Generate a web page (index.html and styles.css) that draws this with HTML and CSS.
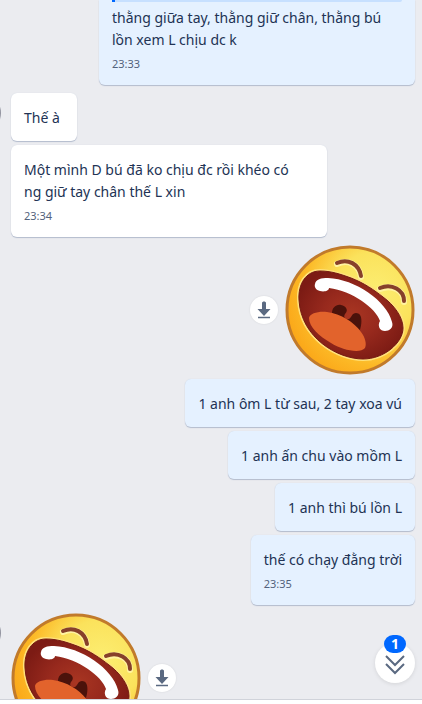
FILE: index.html
```html
<!DOCTYPE html>
<html lang="vi">

<head>
    <meta charset="UTF-8">
    <meta name="viewport" content="width=device-width, initial-scale=1.0">
    <title>Chat</title>
    <link rel="stylesheet" href="styles.css">
</head>

<body>
    <!-- shared shapes -->
    <svg class="defs" width="0" height="0" aria-hidden="true">
        <defs>
            <radialGradient id="skin" cx="0.7" cy="0.36" r="0.72">
                <stop offset="0" stop-color="#fcee72"></stop>
                <stop offset="0.45" stop-color="#fbe25c"></stop>
                <stop offset="0.8" stop-color="#fcb926"></stop>
                <stop offset="1" stop-color="#fba91a"></stop>
            </radialGradient>
            <radialGradient id="throat" cx="0.5" cy="0.5" r="0.55">
                <stop offset="0" stop-color="#a93622"></stop>
                <stop offset="0.5" stop-color="#97291d"></stop>
                <stop offset="1" stop-color="#7c1b14"></stop>
            </radialGradient>
            <symbol id="laugh" viewBox="0 0 130 130">
                <circle cx="65" cy="65" r="63" fill="url(#skin)" stroke="#c17a2b" stroke-width="3"></circle>
                <path d="M14 55C13 39 21 26 35 26C46 26 55 29 66 33C79 38 89 45 98 52C109 60 118 72 118 83C118 98 99 114 78 114C53 114 16 93 14 55Z" fill="none" stroke="#ffe17a" stroke-width="4"></path>
                <path d="M14 55C13 39 21 26 35 26C46 26 55 29 66 33C79 38 89 45 98 52C109 60 118 72 118 83C118 98 99 114 78 114C53 114 16 93 14 55Z" fill="url(#throat)" stroke="#751a12" stroke-width="1"></path>
                <path d="M47 68C47 63 51 59 56 60C61 61 64 65 60 69C58 72 60 75 64 74C67 72 67 68 71 68C78 68 77 79 75 85Z" fill="#4b120b"></path>
                <path d="M24 73C25 68 34 66 42 67C56 69 69 77 76 87C80 92 82 99 80 103C75 109 57 105 46 98C34 91 24 82 24 73Z" fill="#e2632c"></path>
                <path d="M30 39C31 34 36 33 43 33C70 34 102 56 107 77C109 83 104 86 100 86C95 86 92 81 95 76C91 63 67 46 44 43C44 46 39 47 35 46C31 45 29 42 30 39Z" fill="#fff"></path>
                <g fill="none" stroke-linecap="round">
                    <path d="M52 19C63 14 74 19 76 32M95 44C107 39 119 45 119 57" stroke="#fff3a0" stroke-width="6"></path>
                    <path d="M52 18C63 13 74 19 76 31M95 43C107 38 119 45 119 56" stroke="#87402a" stroke-width="4"></path>
                </g>
            </symbol>
            <symbol id="download" viewBox="0 0 28 28">
                <path d="M12 7C12 5 16 5 16 7V13H20.500L14 20L7.500 13H12Z" fill="#5a6981"></path>
                <path d="M8 21.500H20" stroke="#5a6981" stroke-width="1.500"></path>
            </symbol>
        </defs>
    </svg>

    <div class="chat">
        <div class="messages">
            <div class="group mine">
                <div class="bubble cut">
                    <div class="quote"></div>
                    <p>thằng giữa tay, thằng giữ chân, thằng bú lồn xem L chịu dc k</p>
                    <time>23:33</time>
                </div>
            </div>

            <div class="group">
                <div class="avatar"></div>
                <div class="bubble">
                    <p>Thế à</p>
                </div>
                <div class="bubble wide">
                    <p>Một mình D bú đã ko chịu đc rồi khéo có<br>ng giữ tay chân thế L xin</p>
                    <time>23:34</time>
                </div>
            </div>

            <div class="group mine">
                <div class="sticker">
                    <svg class="emoji" role="img" aria-label="😆"><use href="#laugh"></use></svg>
                    <button class="save" aria-label="Tải về"><svg><use href="#download"></use></svg></button>
                </div>
                <div class="bubble">
                    <p>1 anh ôm L từ sau, 2 tay xoa vú</p>
                </div>
                <div class="bubble">
                    <p>1 anh ấn chu vào mồm L</p>
                </div>
                <div class="bubble">
                    <p>1 anh thì bú lồn L</p>
                </div>
                <div class="bubble">
                    <p>thế có chạy đằng trời</p>
                    <time>23:35</time>
                </div>
            </div>

            <div class="group">
                <div class="avatar"></div>
                <div class="sticker">
                    <svg class="emoji" role="img" aria-label="😆"><use href="#laugh"></use></svg>
                    <button class="save" aria-label="Tải về"><svg><use href="#download"></use></svg></button>
                </div>
            </div>
        </div>

        <button class="to-bottom" aria-label="Xuống cuối">
            <svg viewBox="0 0 40 40">
                <path d="M11 13L20 22L29 13M11 21L20 30L29 21" fill="none" stroke="#5a6981" stroke-width="2"></path>
            </svg>
            <span class="badge">1</span>
        </button>
    </div>
    <div class="toolbar"></div>
</body>

</html>
```
FILE: styles.css
```css
* {
    box-sizing: border-box;
}

body {
    margin: 0;
    height: 100vh;
    display: flex;
    flex-direction: column;
    font-family: "Noto Sans", sans-serif;
    font-size: 14px;
    line-height: 22px;
    color: #223354;
    background-color: #ebecf0;
}

.defs {
    position: absolute;
}

.chat {
    position: relative;
    flex: 1;
    min-height: 0;
    overflow: hidden;
}

.messages {
    display: flex;
    flex-direction: column;
    gap: 8px;
    padding: 0 7px 0 11px;
}

.group {
    position: relative;
    display: flex;
    flex-direction: column;
    align-items: flex-start;
    gap: 4px;
}

.mine {
    align-items: flex-end;
}

.bubble {
    min-width: 66px;
    max-width: 316px;
    padding: 14px 13px 12px;
    border-radius: 6px;
    background-color: #fff;
    box-shadow: 0 1px 1px #b3bccd, 0 0 1px #ccd2dd;
}

.wide {
    width: 316px;
}

.mine .bubble {
    background-color: #e5f1ff;
}

.bubble p {
    margin: 0;
}

.bubble time {
    display: block;
    margin-top: 4px;
    font-size: 11px;
    line-height: 18px;
    color: #53627c;
}

/* message whose top is scrolled away */
.bubble.cut {
    padding-top: 0;
    border-radius: 0 0 6px 6px;
}

.quote {
    height: 2px;
    margin-bottom: 5px;
    border-left: 3px solid #0068ff;
    border-radius: 0 0 4px 0;
    background-color: #c7e0ff;
}

/* only the right edge shows */
.avatar {
    position: absolute;
    top: 0;
    left: -50px;
    width: 40px;
    height: 40px;
    border-radius: 50%;
    background-color: #9294a0;
}

.sticker {
    display: flex;
    align-items: center;
    gap: 7px;
}

.mine .sticker {
    flex-direction: row-reverse;
}

.emoji {
    display: block;
    width: 130px;
    height: 130px;
}

.save {
    width: 28px;
    height: 28px;
    padding: 0;
    border: 0;
    border-radius: 50%;
    background-color: #fff;
    box-shadow: 0 0 2px rgba(0, 0, 0, 0.1);
    cursor: pointer;
}

.save svg {
    display: block;
    width: 28px;
    height: 28px;
}

.to-bottom {
    position: absolute;
    right: 7px;
    bottom: 16px;
    width: 40px;
    height: 40px;
    padding: 0;
    border: 0;
    border-radius: 50%;
    background-color: #fff;
    box-shadow: 0 1px 4px rgba(0, 0, 0, 0.1);
    cursor: pointer;
}

.to-bottom svg {
    display: block;
}

.badge {
    position: absolute;
    top: -8px;
    left: 9px;
    width: 22px;
    height: 18px;
    border-radius: 9px;
    background-color: #0068ff;
    color: #fff;
    font: bold 14px/18px "Noto Sans", sans-serif;
    text-align: center;
}

.toolbar {
    height: 5px;
    border-top: 1px solid #d0d3da;
    background-color: #fff;
}
```
